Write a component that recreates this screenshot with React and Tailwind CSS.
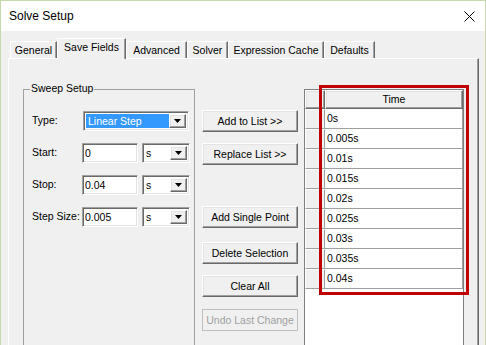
import React from "react";

const sunken =
  "border border-t-[#a0a0a0] border-l-[#a0a0a0] border-b-white border-r-white shadow-[inset_1px_1px_0_#696969,inset_-1px_-1px_0_#e3e3e3]";
const raised =
  "border border-t-white border-l-white border-b-[#696969] border-r-[#696969] shadow-[inset_-1px_-1px_0_#a0a0a0,inset_1px_1px_0_#e3e3e3]";

function Arrow() {
  return (
    <div className={`w-[17px] h-full bg-[#f0f0f0] flex items-center justify-center ${raised}`}>
      <svg width="7" height="4" viewBox="0 0 7 4">
        <path d="M0 0H7L3.5 4Z" fill="#000" />
      </svg>
    </div>
  );
}

function Unit() {
  return (
    <div className={`w-[48px] h-[20px] bg-white flex items-stretch p-[2px] ${sunken}`}>
      <div className="flex-1 flex items-center pl-[1px] leading-none">s</div>
      <Arrow />
    </div>
  );
}

function Field({ value }) {
  return (
    <div className={`w-[56px] h-[20px] bg-white flex items-center pl-[2px] leading-none ${sunken}`}>
      {value}
    </div>
  );
}

function Btn({ children, disabled, mt }) {
  return (
    <div
      className={`h-[22px] w-[96px] flex items-center justify-center bg-[#f0f0f0] leading-none ${mt} ${
        disabled
          ? "border border-[#bfbfbf] text-[#a0a0a0]"
          : raised + " text-black"
      }`}
    >
      {children}
    </div>
  );
}

const tabs = [
  ["General", 47],
  ["Save Fields", 69],
  ["Advanced", 61],
  ["Solver", 41],
  ["Expression Cache", 96],
  ["Defaults", 51],
];

const rows = ["0s", "0.005s", "0.01s", "0.015s", "0.02s", "0.025s", "0.03s", "0.035s", "0.04s"];

export default function App() {
  return (
    <div className="relative w-[486px] h-[345px] overflow-hidden bg-[#f0f0f0] border-l border-r border-t border-[#c6d9a8] font-['Liberation_Sans',Arial,sans-serif] text-[10.5px] text-black">
      {/* title bar */}
      <div className="h-[30px] bg-white flex items-center justify-between pl-[8px] pr-[10px]">
        <span className="text-[12px] leading-none">Solve Setup</span>
        <svg width="11" height="11" viewBox="0 0 11 11">
          <path d="M0.5 0.5L10.5 10.5M10.5 0.5L0.5 10.5" stroke="#000" strokeWidth="1" />
        </svg>
      </div>

      {/* tabs */}
      <div className="mt-[7px] ml-[9px] h-[20px] flex items-end">
        {tabs.map(([t, w]) => {
          const sel = t === "Save Fields";
          return (
            <div
              key={t}
              style={{ width: w }}
              className={`flex items-center justify-center leading-none bg-[#f0f0f0] border-t border-l border-white border-r border-r-[#696969] shadow-[inset_-1px_0_0_#a0a0a0] ${
                sel ? "h-[21px] -mb-[1px] relative z-10 pb-[3px]" : "h-[17px]"
              }`}
            >
              {t}
            </div>
          );
        })}
      </div>

      {/* panel */}
      <div className="ml-[7px] w-[471px] h-[300px] border-t border-l border-white border-r border-r-[#696969] shadow-[inset_-1px_0_0_#a0a0a0] flex pl-[14px]">
        {/* group box */}
        <div className="relative mt-[30px] w-[172px] h-[270px] border border-[#a0a0a0] pt-[21px] pl-[8px]">
          <span className="absolute left-[6px] -top-[7px] px-[1px] bg-[#f0f0f0] leading-none">
            Sweep Setup
          </span>
          <div className="flex flex-col gap-[12px]">
            <div className="flex items-center h-[20px]">
              <span className="w-[51px]">Type:</span>
              <div className={`w-[106px] h-[20px] bg-white flex items-stretch p-[2px] ${sunken}`}>
                <div className="flex-1 bg-[#3399ff] text-white flex items-center pl-[2px] leading-none">
                  Linear Step
                </div>
                <Arrow />
              </div>
            </div>
            <div className="flex items-center h-[20px]">
              <span className="w-[50px]">Start:</span>
              <Field value="0" />
              <div className="w-[4px]" />
              <Unit />
            </div>
            <div className="flex items-center h-[20px]">
              <span className="w-[50px]">Stop:</span>
              <Field value="0.04" />
              <div className="w-[4px]" />
              <Unit />
            </div>
            <div className="flex items-center h-[20px]">
              <span className="w-[50px]">Step Size:</span>
              <Field value="0.005" />
              <div className="w-[4px]" />
              <Unit />
            </div>
          </div>
        </div>

        {/* buttons */}
        <div className="ml-[7px] flex flex-col">
          <Btn mt="mt-[51px]">Add to List &gt;&gt;</Btn>
          <Btn mt="mt-[11px]">Replace List &gt;&gt;</Btn>
          <Btn mt="mt-[41px]">Add Single Point</Btn>
          <Btn mt="mt-[14px]">Delete Selection</Btn>
          <Btn mt="mt-[11px]">Clear All</Btn>
          <Btn mt="mt-[12px]" disabled>
            Undo Last Change
          </Btn>
        </div>

        {/* list */}
        <div className="ml-[6px] mt-[30px] w-[160px] h-[270px] bg-white border-l border-t border-r border-[#808080]">
          <div className="flex h-[19px]">
            <div className={`w-[20px] bg-[#f0f0f0] ${raised}`} />
            <div className={`w-[138px] bg-[#f0f0f0] flex items-center justify-center leading-none ${raised}`}>
              Time
            </div>
          </div>
          {rows.map((r) => (
            <div key={r} className="flex h-[20px]">
              <div className="w-[20px] bg-[#f0f0f0] border-t border-l border-white border-b border-b-[#a0a0a0] border-r border-r-[#a0a0a0]" />
              <div className="w-[138px] bg-white border-b border-[#a0a0a0] border-r flex items-center pl-[2px] leading-none">
                {r}
              </div>
            </div>
          ))}
        </div>
      </div>

      {/* red highlight */}
      <div className="absolute left-[318px] top-[84px] w-[150px] h-[210px] border-[3px] border-[#c00000]" />
    </div>
  );
}
